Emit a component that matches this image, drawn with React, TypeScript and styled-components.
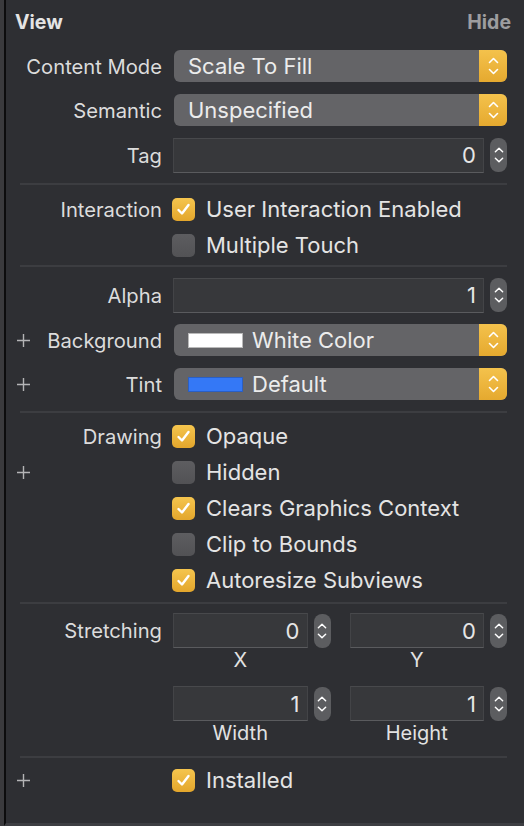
import React from "react";
import styled, { createGlobalStyle } from "styled-components";

const GlobalStyle = createGlobalStyle`
  html, body { margin: 0; padding: 0; background: #2e2f33; }
  body { font-family: "Inter", "Liberation Sans", sans-serif; -webkit-font-smoothing: antialiased; }
`;

const Frame = styled.div`
  width: 524px;
  height: 826px;
  box-sizing: border-box;
  border-left: 4px solid #3a3a3d;
  background: #2e2f33;
  overflow: hidden;
`;

const Panel = styled.div`
  height: 100%;
  box-sizing: border-box;
  border-left: 2px solid #0c0c0d;
  border-bottom: 3px solid #3d3e42;
  padding-right: 17px;
  display: flex;
  flex-direction: column;
  color: #e2e2e2;
`;

const Header = styled.div`
  height: 44px;
  display: flex;
  align-items: center;
  justify-content: space-between;
  padding: 0 0 0 9px;
  margin-right: -4px;
  font-weight: 700;
  font-size: 19.5px;
`;

const Title = styled.span`
  color: #e4e4e4;
`;

const HideLink = styled.span`
  color: #9d9d9f;
`;

const Section = styled.div<{ $pt?: number; $pb?: number }>`
  display: flex;
  flex-direction: column;
  padding-top: ${(p) => p.$pt ?? 0}px;
  padding-bottom: ${(p) => p.$pb ?? 0}px;
`;

const Separator = styled.div`
  height: 2px;
  margin-left: 14px;
  background: #3c3d41;
`;

const Row = styled.div<{ $h: number }>`
  height: ${(p) => p.$h}px;
  display: grid;
  grid-template-columns: 30px 137px 1fr;
  align-items: center;
`;

const PlusCell = styled.div`
  display: flex;
  align-items: center;
  justify-content: center;
  padding-left: 4px;
`;

const Label = styled.div`
  display: flex;
  justify-content: flex-end;
  padding-right: 11px;
  font-size: 20.2px;
  color: #dcdcdc;
  white-space: nowrap;
`;

const Popup = styled.div`
  height: 32px;
  margin-left: 1px;
  border-radius: 6px;
  background: #646467;
  display: flex;
  align-items: center;
  overflow: hidden;
`;

const PopupValue = styled.div`
  flex: 1;
  display: flex;
  align-items: center;
  gap: 9px;
  padding-left: 14px;
  font-size: 22px;
  color: #ececec;
`;

const Swatch = styled.span<{ $color: string; $border: string }>`
  width: 53px;
  height: 13px;
  background: ${(p) => p.$color};
  border: 1px solid ${(p) => p.$border};
`;

const PopupArrows = styled.div`
  width: 28px;
  align-self: stretch;
  background: linear-gradient(#f4c24c, #e5a92f);
  display: flex;
  align-items: center;
  justify-content: center;
`;

const FieldGroup = styled.div`
  display: grid;
  grid-template-columns: 1fr 17px;
  column-gap: 6px;
  align-items: center;
`;

const TextField = styled.div`
  height: 35px;
  box-sizing: border-box;
  background: #37383b;
  border: 1px solid #434447;
  border-top-color: #48494c;
  border-bottom-color: #5a5b5e;
  display: flex;
  align-items: center;
  justify-content: flex-end;
  padding-right: 7px;
  font-size: 22px;
  color: #e6e6e6;
`;

const Stepper = styled.div`
  width: 17px;
  height: 34px;
  border-radius: 8px;
  background: #5c5d60;
  display: flex;
  align-items: center;
  justify-content: center;
`;

const CheckLine = styled.div`
  display: flex;
  align-items: center;
  gap: 11px;
  margin-left: -1px;
  font-size: 22px;
  color: #e4e4e4;
  white-space: nowrap;
`;

const Box = styled.div<{ $on: boolean }>`
  width: 23px;
  height: 23px;
  flex: none;
  border-radius: 5px;
  box-sizing: border-box;
  background: ${(p) =>
    p.$on ? "linear-gradient(#f5c54e, #e3a62c)" : "linear-gradient(#5d5d60, #525255)"};
  display: flex;
  align-items: center;
  justify-content: center;
`;

const PairGrid = styled.div`
  display: grid;
  grid-template-columns: 1fr 1fr;
  column-gap: 19px;
`;

const PairBlock = styled.div<{ $mt: number }>`
  display: grid;
  grid-template-columns: 30px 137px 1fr;
  margin-top: ${(p) => p.$mt}px;
`;

const PairLabel = styled(Label)`
  height: 35px;
  align-items: center;
`;

const Caption = styled.div`
  height: 24px;
  line-height: 24px;
  text-align: center;
  font-size: 20px;
  color: #e2e2e2;
  padding-right: 23px;
`;

const Spacer = styled.div`
  flex: 1;
`;

const Plus = () => (
  <svg width="15" height="15" viewBox="0 0 15 15">
    <path d="M7.5 1v13M1 7.5h13" stroke="#b4b4b6" strokeWidth="1.4" fill="none" />
  </svg>
);

const Chevrons = ({ w = 11 }: { w?: number }) => (
  <svg width={w} height="22" viewBox="0 0 11 22">
    <path
      d="M1.5 7.5L5.5 3.5L9.5 7.5M1.5 14.5L5.5 18.5L9.5 14.5"
      stroke="#ffffff"
      strokeWidth="1.6"
      fill="none"
      strokeLinecap="round"
      strokeLinejoin="round"
    />
  </svg>
);

const Check = () => (
  <svg width="17" height="17" viewBox="0 0 17 17">
    <path
      d="M3.5 9L7 12.5L13.5 4"
      stroke="#ffffff"
      strokeWidth="2.4"
      fill="none"
      strokeLinecap="round"
      strokeLinejoin="round"
    />
  </svg>
);

const PopupControl = ({
  value,
  swatch,
}: {
  value: string;
  swatch?: { color: string; border: string };
}) => (
  <Popup>
    <PopupValue>
      {swatch && <Swatch $color={swatch.color} $border={swatch.border} />}
      <span>{value}</span>
    </PopupValue>
    <PopupArrows>
      <Chevrons />
    </PopupArrows>
  </Popup>
);

const NumberField = ({ value }: { value: string }) => (
  <FieldGroup>
    <TextField>{value}</TextField>
    <Stepper>
      <Chevrons w={10} />
    </Stepper>
  </FieldGroup>
);

const CheckRow = ({
  label,
  text,
  on,
  plus,
}: {
  label?: string;
  text: string;
  on: boolean;
  plus?: boolean;
}) => (
  <Row $h={36}>
    <PlusCell>{plus && <Plus />}</PlusCell>
    <Label>{label ?? ""}</Label>
    <CheckLine>
      <Box $on={on}>{on && <Check />}</Box>
      <span>{text}</span>
    </CheckLine>
  </Row>
);

export default function App() {
  return (
    <>
      <GlobalStyle />
      <Frame>
        <Panel>
          <Header>
            <Title>View</Title>
            <HideLink>Hide</HideLink>
          </Header>

          <Section $pb={5}>
            <Row $h={44}>
              <PlusCell />
              <Label>Content Mode</Label>
              <PopupControl value="Scale To Fill" />
            </Row>
            <Row $h={44}>
              <PlusCell />
              <Label>Semantic</Label>
              <PopupControl value="Unspecified" />
            </Row>
            <Row $h={46}>
              <PlusCell />
              <Label>Tag</Label>
              <NumberField value="0" />
            </Row>
          </Section>
          <Separator />

          <Section $pt={6} $pb={2}>
            <CheckRow label="Interaction" text="User Interaction Enabled" on />
            <CheckRow text="Multiple Touch" on={false} />
          </Section>
          <Separator />

          <Section $pt={5} $pb={5}>
            <Row $h={46}>
              <PlusCell />
              <Label>Alpha</Label>
              <NumberField value="1" />
            </Row>
            <Row $h={44}>
              <PlusCell>
                <Plus />
              </PlusCell>
              <Label>Background</Label>
              <PopupControl value="White Color" swatch={{ color: "#ffffff", border: "#b9b9b9" }} />
            </Row>
            <Row $h={44}>
              <PlusCell>
                <Plus />
              </PlusCell>
              <Label>Tint</Label>
              <PopupControl value="Default" swatch={{ color: "#3478f6", border: "#2a5fc4" }} />
            </Row>
          </Section>
          <Separator />

          <Section $pt={5} $pb={4}>
            <CheckRow label="Drawing" text="Opaque" on />
            <CheckRow text="Hidden" on={false} plus />
            <CheckRow text="Clears Graphics Context" on />
            <CheckRow text="Clip to Bounds" on={false} />
            <CheckRow text="Autoresize Subviews" on />
          </Section>
          <Separator />

          <Section $pb={11}>
            <PairBlock $mt={9}>
              <PlusCell />
              <PairLabel>Stretching</PairLabel>
              <PairGrid>
                <div>
                  <NumberField value="0" />
                  <Caption>X</Caption>
                </div>
                <div>
                  <NumberField value="0" />
                  <Caption>Y</Caption>
                </div>
              </PairGrid>
            </PairBlock>
            <PairBlock $mt={14}>
              <PlusCell />
              <PairLabel />
              <PairGrid>
                <div>
                  <NumberField value="1" />
                  <Caption>Width</Caption>
                </div>
                <div>
                  <NumberField value="1" />
                  <Caption>Height</Caption>
                </div>
              </PairGrid>
            </PairBlock>
          </Section>
          <Separator />

          <Section $pt={4}>
            <CheckRow text="Installed" on plus />
          </Section>
          <Spacer />
        </Panel>
      </Frame>
    </>
  );
}
